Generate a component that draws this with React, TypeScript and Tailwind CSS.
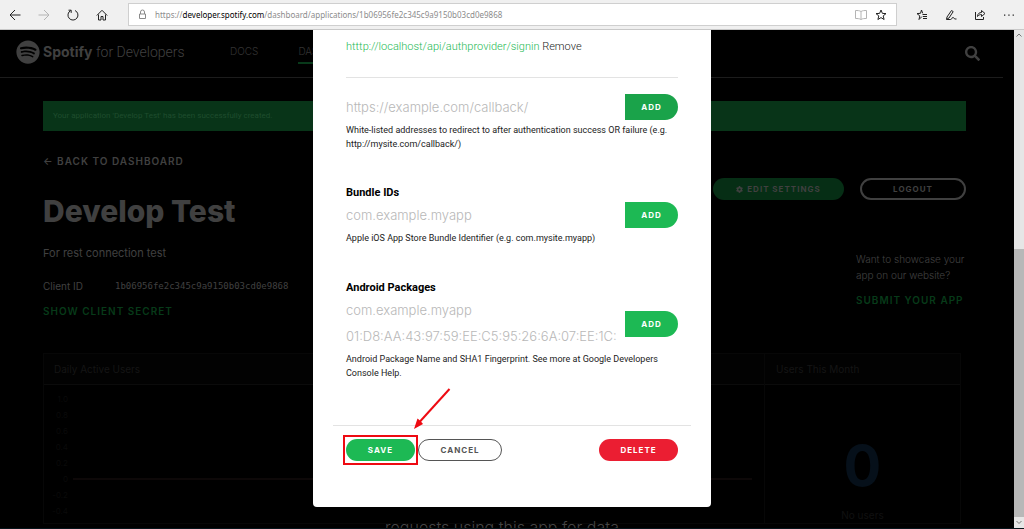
import React from "react";
import { FaCog, FaSearch, FaSpotify } from "react-icons/fa";

const iconProps = {
  fill: "none",
  stroke: "currentColor",
  strokeWidth: 1,
  "aria-hidden": true,
} as const;

function ToolbarButton({ label, className = "", children }: { label: string; className?: string; children: React.ReactNode }) {
  return (
    <button type="button" aria-label={label} className={`flex size-5 shrink-0 items-center justify-center ${className}`}>
      {children}
    </button>
  );
}

function StarIcon() {
  return (
    <svg width="12" height="12" viewBox="0 0 12 12" {...iconProps}>
      <path d="M6 1l1.4 3.4 3.6.2-2.8 2.3.9 3.6L6 8.6l-3.1 1.9.9-3.6L1 4.6l3.6-.2z" />
    </svg>
  );
}

function BrowserBar() {
  return (
    <header className="flex h-[30px] shrink-0 items-center border-b border-[#c8c8c8] bg-[#f0f0f0] pl-[5px] text-[#222]">
      <div className="flex gap-[9px]">
        <ToolbarButton label="Back">
          <svg width="12" height="12" viewBox="0 0 12 12" {...iconProps}>
            <path d="M6 1L1 6l5 5M1 6h10.500" />
          </svg>
        </ToolbarButton>
        <ToolbarButton label="Forward" className="text-[#b4b4b4]">
          <svg width="12" height="12" viewBox="0 0 12 12" {...iconProps}>
            <path d="M6 1l5 5-5 5M11 6H.5" />
          </svg>
        </ToolbarButton>
        <ToolbarButton label="Refresh">
          <svg width="12" height="12" viewBox="0 0 12 12" {...iconProps}>
            <path d="M8 1.500a5 5 0 1 1-4.300.1M1.500 1.200h2.700v2.700" />
          </svg>
        </ToolbarButton>
        <ToolbarButton label="Home">
          <svg width="12" height="12" viewBox="0 0 12 12" {...iconProps}>
            <path d="M.8 6.500L6 1.300l5.200 5.200M2.500 5.500v5.500h2.500V7.500h2V11h2.500V5.500" />
          </svg>
        </ToolbarButton>
      </div>
      <div className="ml-4 flex h-[23px] min-w-0 flex-1 items-center border border-[#cfcfcf] bg-white pl-2 pr-[5px]">
        <svg className="shrink-0 text-[#8a8a8a]" width="11" height="11" viewBox="0 0 11 11" {...iconProps}>
          <path d="M2.500 5h6v4.500h-6zM3.500 5V3a2 2 0 0 1 4 0v2" />
        </svg>
        <p className="ml-[7px] flex-1 truncate font-['Noto_Sans',sans-serif] text-[8px] text-[#8c8c8c]">
          https://<span className="text-black">developer.spotify.com</span>/dashboard/applications/1b06956fe2c345c9a9150b03cd0e9868
        </p>
        <ToolbarButton label="Reading view" className="text-[#b4b4b4]">
          <svg width="12" height="10" viewBox="0 0 12 10" {...iconProps}>
            <path d="M6 1.500C4.500.5 2.500.5.5.5v8c2 0 4 0 5.500 1 1.500-1 3.500-1 5.500-1v-8c-2 0-4 0-5.500 1zM6 1.500v8" />
          </svg>
        </ToolbarButton>
        <ToolbarButton label="Add to favorites">
          <StarIcon />
        </ToolbarButton>
      </div>
      <div className="ml-[15px] mr-[5px] flex gap-[9px]">
        <ToolbarButton label="Favorites">
          <svg width="12" height="12" viewBox="0 0 12 12" {...iconProps}>
            <path d="M6 7.500L3 10.500l.8-3.600L1 4.600l3.500-.3L5.500 1l1.200 3.300M6.500 5.500H11M7 7.500h4M7 9.500h4" />
          </svg>
        </ToolbarButton>
        <ToolbarButton label="Make a web note">
          <svg width="12" height="12" viewBox="0 0 12 12" {...iconProps}>
            <path d="M2 8L6.500 1.500 8.200 2.600 4 9 1.500 10.300zM1.500 10.500h4c1.500 0 1-2 2.500-2s.5 2 3.500 1.500" />
          </svg>
        </ToolbarButton>
        <ToolbarButton label="Share">
          <svg width="12" height="12" viewBox="0 0 12 12" {...iconProps}>
            <path d="M1.500 3v7.500h8V8M3.500 7.500c0-3 2-4 4-4V1.500L11 4.500 7.500 7.500v-2c-1.500 0-3 .5-4 2z" />
          </svg>
        </ToolbarButton>
        <ToolbarButton label="More">
          <svg width="12" height="12" viewBox="0 0 12 12" fill="currentColor" aria-hidden="true">
            <path d="M1 5.500h1.300v1.300H1zM5.300 5.500h1.300v1.300H5.300zM9.600 5.500h1.300v1.300H9.600z" />
          </svg>
        </ToolbarButton>
      </div>
    </header>
  );
}

function SiteHeader() {
  return (
    <div className="mr-[11px] flex h-12 items-center border-b border-[#1c1c1c] pl-4 pr-[23px] text-[#404040]">
      <a href="#home" className="-mt-1 flex w-[167px] items-center gap-[3px]">
        <FaSpotify className="size-6 shrink-0" aria-hidden="true" />
        <span className="whitespace-nowrap font-['Roboto',sans-serif] text-[14px] font-light">
          <b className="font-['Inter',sans-serif] font-bold">Spotify</b> for Developers
        </span>
      </a>
      <nav className="-mt-1 ml-[47px] flex flex-1 gap-10 text-[10px] font-light leading-[22px] text-[#333]">
        <a href="#docs">DOCS</a>
        <a href="#dashboard" className="border-b-2 border-[#08391a]">DASHBOARD</a>
      </nav>
      <button type="button" aria-label="Search">
        <FaSearch className="size-[15px]" aria-hidden="true" />
      </button>
    </div>
  );
}

const ticks = ["1.0", "0.8", "0.6", "0.4", "0.2", "0", "-0.2", "-0.4"];

function Stats() {
  return (
    <section className="relative mr-[5px] mt-[34px] flex border border-[#070707]">
      <div className="flex-1">
        <h2 className="h-[31px] border-b border-[#0b0b0b] bg-[#020202] pl-[10px] text-[10px] leading-[30px] text-[#151515]">Daily Active Users</h2>
        <div className="flex pr-3 pt-[6px]">
          <ul className="w-6 text-right text-[8px] leading-4 text-[#0a0a0a]">
            {ticks.map((tick) => (
              <li key={tick}>{tick}</li>
            ))}
          </ul>
          <div className="ml-[5px] mt-[87px] h-[2px] flex-1 bg-[#0d0808]" />
        </div>
      </div>
      <div className="w-[196px] border-l border-[#070707]">
        <h2 className="h-[31px] border-b border-[#0b0b0b] bg-[#020202] pl-[11px] text-[10px] leading-[30px] text-[#151515]">Users This Month</h2>
        <p className="pt-[53px] text-center text-[56px] font-bold leading-[56px] text-[#06101a]">0</p>
        <p className="mt-[13px] text-center text-[10px] leading-4 text-[#101010]">No users</p>
      </div>
      <p className="absolute inset-x-0 top-[163px] text-center text-[16px] font-light leading-5 text-[#444]">requests using this app for data</p>
    </section>
  );
}

function Dashboard() {
  return (
    <main className="h-full overflow-hidden bg-black text-[#404040]">
      <SiteHeader />
      <div className="pl-[43px] pr-12">
        <p className="mt-[23px] bg-[#083418] px-[10px] font-['Roboto',sans-serif] text-[8px] leading-[30px] text-[#1f4d2e]">
          Your application 'Develop Test' has been successfully created.
        </p>
        <a href="#dashboard" className="mt-6 block text-[10px] font-semibold leading-3 tracking-[1px]">
          ← BACK TO DASHBOARD
        </a>
        <div className="mt-[11px] flex justify-between">
          <div className="pt-[13px]">
            <h1 className="text-[30px] font-extrabold leading-10">Develop Test</h1>
            <p className="mt-[14px] text-[11px] leading-4">For rest connection test</p>
            <dl className="mt-[17px] flex leading-4">
              <dt className="w-[72px] text-[10px]">Client ID</dt>
              <dd className="font-['DejaVu_Sans_Mono',monospace] text-[9px]">1b06956fe2c345c9a9150b03cd0e9868</dd>
            </dl>
            <button type="button" className="mt-[9px] block text-[10px] font-semibold leading-4 tracking-[1px] text-[#073a19]">
              SHOW CLIENT SECRET
            </button>
          </div>
          <div className="flex flex-col items-end">
            <div className="flex gap-4 text-[8px] font-bold tracking-[1px]">
              <button type="button" className="flex h-[22px] w-[131px] items-center justify-center gap-1 rounded-full bg-[#062e15]">
                <FaCog className="size-[7px]" aria-hidden="true" />
                EDIT SETTINGS
              </button>
              <button type="button" className="h-[22px] w-[106px] rounded-full border-2 border-[#404040]">LOGOUT</button>
            </div>
            <div className="mt-[51px] w-[110px] whitespace-nowrap text-[10px] leading-4">
              <p className="font-light">
                Want to showcase your
                <br />
                app on our website?
              </p>
              <a href="#submit" className="mt-[9px] block font-semibold tracking-[1px] text-[#073a19]">SUBMIT YOUR APP</a>
            </div>
          </div>
        </div>
        <Stats />
      </div>
    </main>
  );
}

function AddButton({ active = false }: { active?: boolean }) {
  return (
    <button
      type="button"
      className={`h-[26px] w-[53px] shrink-0 rounded-r-full font-['Inter',sans-serif] text-[8px] font-bold tracking-[1px] text-white ${active ? "bg-[#1aa34a]" : "bg-[#1db954]"}`}
    >
      ADD
    </button>
  );
}

function Field({ label, placeholder }: { label: string; placeholder: string }) {
  return (
    <input
      type="text"
      aria-label={label}
      placeholder={placeholder}
      className="block h-[26px] w-full min-w-0 bg-transparent font-['Inter',sans-serif] text-[13px] font-light text-black outline-none placeholder:text-[#b8b8b8]"
    />
  );
}

function SettingsDialog() {
  return (
    <div role="dialog" aria-label="Edit settings" className="w-[398px] rounded-b bg-white px-5 pb-[46px] font-['Roboto',sans-serif] text-[#222]">
      <form className="px-[13px]">
        <p className="pt-[9px] text-[11px] font-light leading-4">
          <a href="#signin" className="text-[#1db954]">htttp://localhost/api/authprovider/signin</a>{" "}
          <button type="button">Remove</button>
        </p>
        <hr className="mt-[22px] border-[#e3e3e3]" />

        <div className="mt-4 flex items-center">
          <Field label="Redirect URI" placeholder="https://example.com/callback/" />
          <AddButton active />
        </div>
        <p className="mt-[3px] text-[9px] leading-[14px]">
          White-listed addresses to redirect to after authentication success OR failure (e.g.
          http://mysite.com/callback/)
        </p>

        <h3 className="mt-[35px] text-[11px] font-bold leading-[14px] text-black">Bundle IDs</h3>
        <div className="mt-[2px] flex items-center">
          <Field label="Bundle ID" placeholder="com.example.myapp" />
          <AddButton />
        </div>
        <p className="mt-[3px] text-[9px] leading-[14px]">Apple iOS App Store Bundle Identifier (e.g. com.mysite.myapp)</p>

        <h3 className="mt-9 text-[11px] font-bold leading-[14px] text-black">Android Packages</h3>
        <div className="mt-[2px] flex items-center">
          <div className="min-w-0 flex-1">
            <Field label="Android package name" placeholder="com.example.myapp" />
            <Field label="SHA1 fingerprint" placeholder="01:D8:AA:43:97:59:EE:C5:95:26:6A:07:EE:1C:" />
          </div>
          <div className="ml-2"><AddButton /></div>
        </div>
        <p className="mt-[3px] text-[9px] leading-[14px]">
          Android Package Name and SHA1 Fingerprint. See more at Google Developers Console Help.
        </p>
      </form>
      <hr className="mt-[45px] border-[#e3e3e3]" />
      <div className="mt-[13px] flex gap-[3px] px-[13px] font-['Inter',sans-serif] text-[8px] font-bold tracking-[1px] text-white">
        <div className="relative">
          <button type="button" className="h-[22px] w-[69px] rounded-full bg-[#1db954]">SAVE</button>
          <span className="absolute -inset-x-[3px] -inset-y-1 border-2 border-[#ee0a12]" />
          <svg className="absolute -top-[51px] left-[67px]" width="38" height="42" viewBox="0 0 38 42" aria-hidden="true">
            <path d="M36.500 1L7 33.500" stroke="#ee0a12" strokeWidth="2" />
            <path d="M1 41l3.500-10.500 3 2.500 2.500 3z" fill="#ee0a12" />
          </svg>
        </div>
        <button type="button" className="h-[22px] w-[84px] rounded-full border border-[#555] text-[#555]">CANCEL</button>
        <button type="button" className="ml-auto h-[22px] w-[79px] rounded-full bg-[#eb1e32]">DELETE</button>
      </div>
    </div>
  );
}

function ScrollBar() {
  return (
    <div className="flex w-[10px] shrink-0 flex-col bg-[#e6e6e6] text-[#777]" aria-hidden="true">
      <svg width="10" height="10" viewBox="0 0 10 10" {...iconProps}>
        <path d="M2.500 6.500L5 4l2.500 2.500" />
      </svg>
      <div className="flex-[209]" />
      <div className="flex-[268] bg-[#b8b8b8]" />
      <svg width="10" height="11" viewBox="0 0 10 11" {...iconProps}>
        <path d="M2.500 4L5 6.500 7.500 4" />
      </svg>
    </div>
  );
}

export default function App() {
  return (
    <div className="flex h-screen flex-col overflow-hidden bg-black font-['Inter',sans-serif]">
      <BrowserBar />
      <div className="relative flex min-h-0 flex-1">
        <div className="min-w-0 flex-1">
          <Dashboard />
        </div>
        <ScrollBar />
        <div className="absolute inset-x-0 top-0 flex justify-center">
          <SettingsDialog />
        </div>
      </div>
      <div className="h-px shrink-0 bg-[#07141b]" />
    </div>
  );
}
